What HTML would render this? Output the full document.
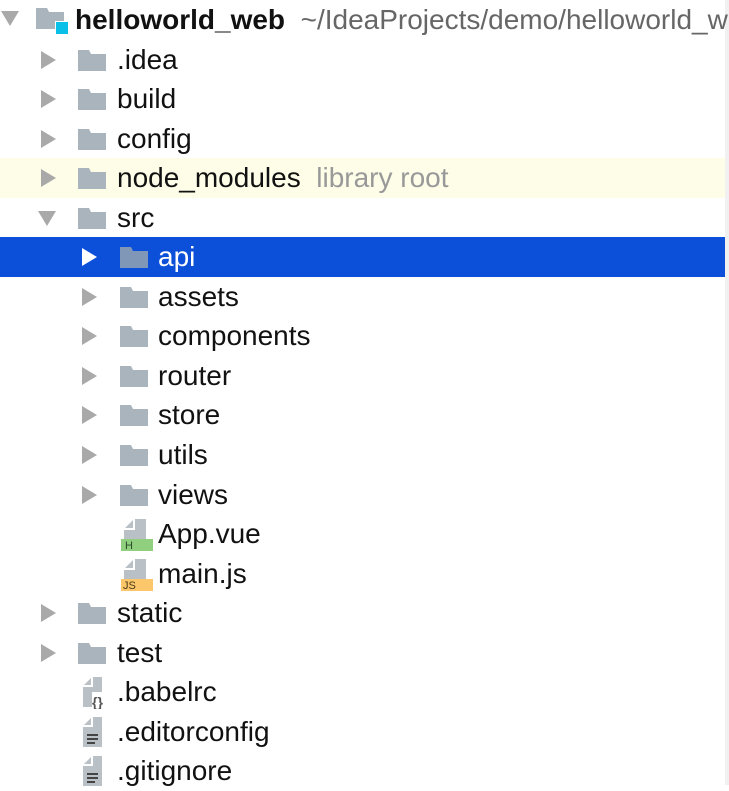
<!DOCTYPE html>
<html><head><meta charset="utf-8"><style>
html,body{margin:0;padding:0;width:729px;height:785px;overflow:hidden;background:#fff;font-family:"Liberation Sans",sans-serif;}
.r{position:absolute;left:0;width:725px;height:40px;}
.t{position:absolute;top:4px;font-size:28px;line-height:32px;color:#111;white-space:nowrap;}
.f{position:absolute;top:10px;width:28px;height:21px;}
.a{position:absolute;top:11px;}
.sb{position:absolute;right:0;top:0;width:4px;height:785px;background:#f1f1f1;}
</style></head><body>
<div class="sb"></div>
<svg width="0" height="0" style="position:absolute"><defs>
<symbol id="fold" viewBox="0 0 28 21"><path d="M0 0H11L13 4H28V21H0Z" fill="#a9b4bc"/></symbol>
<symbol id="ar" viewBox="0 0 16 18"><path d="M1 0L16 9L1 18Z" fill="#a9a9a9"/></symbol>
<symbol id="ad" viewBox="0 0 18 16"><path d="M0 1H18L9 16Z" fill="#a9a9a9"/></symbol>
</defs></svg>

<div class="r" style="top:0">
<svg class="a" style="left:1px;top:10px" width="18" height="16"><use href="#ad"/></svg>
<svg class="f" style="left:36px;top:8px" width="28" height="21"><use href="#fold"/></svg>
<div style="position:absolute;left:55px;top:21px;width:12px;height:12px;background:#0bc0e8;border:1.5px solid #fff"></div>
<div class="t" style="left:75px;font-weight:bold">helloworld_web <span style="font-weight:normal;color:#666">&nbsp;~/IdeaProjects/demo/helloworld_web</span></div>
</div>

<div class="r" style="top:40px"><svg class="a" style="left:40px" width="16" height="18"><use href="#ar"/></svg><svg class="f" style="left:78px" width="28" height="21"><use href="#fold"/></svg><div class="t" style="left:117px">.idea</div></div>
<div class="r" style="top:79px"><svg class="a" style="left:40px" width="16" height="18"><use href="#ar"/></svg><svg class="f" style="left:78px" width="28" height="21"><use href="#fold"/></svg><div class="t" style="left:117px">build</div></div>
<div class="r" style="top:119px"><svg class="a" style="left:40px" width="16" height="18"><use href="#ar"/></svg><svg class="f" style="left:78px" width="28" height="21"><use href="#fold"/></svg><div class="t" style="left:117px">config</div></div>
<div class="r" style="top:158px;background:#fdfde8"><svg class="a" style="left:40px" width="16" height="18"><use href="#ar"/></svg><svg class="f" style="left:78px" width="28" height="21"><use href="#fold"/></svg><div class="t" style="left:117px">node_modules <span style="color:#999">&nbsp;library root</span></div></div>
<div class="r" style="top:198px"><svg class="a" style="left:38px;top:12px" width="18" height="16"><use href="#ad"/></svg><svg class="f" style="left:78px" width="28" height="21"><use href="#fold"/></svg><div class="t" style="left:117px">src</div></div>
<div class="r" style="top:237px;background:#0c4fd8"><svg class="a" style="left:81px" width="16" height="18"><path d="M1 0L16 9L1 18Z" fill="#fff"/></svg><svg class="f" style="left:120px" width="28" height="21"><path d="M0 0H11L13 4H28V21H0Z" fill="#8197b8"/></svg><div class="t" style="left:158px;color:#fff">api</div></div>
<div class="r" style="top:277px"><svg class="a" style="left:81px" width="16" height="18"><use href="#ar"/></svg><svg class="f" style="left:120px" width="28" height="21"><use href="#fold"/></svg><div class="t" style="left:158px">assets</div></div>
<div class="r" style="top:316px"><svg class="a" style="left:81px" width="16" height="18"><use href="#ar"/></svg><svg class="f" style="left:120px" width="28" height="21"><use href="#fold"/></svg><div class="t" style="left:158px">components</div></div>
<div class="r" style="top:356px"><svg class="a" style="left:81px" width="16" height="18"><use href="#ar"/></svg><svg class="f" style="left:120px" width="28" height="21"><use href="#fold"/></svg><div class="t" style="left:158px">router</div></div>
<div class="r" style="top:395px"><svg class="a" style="left:81px" width="16" height="18"><use href="#ar"/></svg><svg class="f" style="left:120px" width="28" height="21"><use href="#fold"/></svg><div class="t" style="left:158px">store</div></div>
<div class="r" style="top:435px"><svg class="a" style="left:81px" width="16" height="18"><use href="#ar"/></svg><svg class="f" style="left:120px" width="28" height="21"><use href="#fold"/></svg><div class="t" style="left:158px">utils</div></div>
<div class="r" style="top:475px"><svg class="a" style="left:81px" width="16" height="18"><use href="#ar"/></svg><svg class="f" style="left:120px" width="28" height="21"><use href="#fold"/></svg><div class="t" style="left:158px">views</div></div>

<div class="r" style="top:514px">
<svg style="position:absolute;left:120px;top:5px" width="34" height="34"><path d="M4 0H26V24H4Z" fill="#b9c1c7"/><path d="M4 0H14L4 10Z" fill="#fff"/><path d="M4 10H14V0" fill="none" stroke="#fff" stroke-width="2"/><rect x="1" y="20" width="32" height="12" fill="#8fcf7e"/><text x="5" y="30" font-family="Liberation Sans" font-size="11" fill="#2c4a2c">H</text></svg>
<div class="t" style="left:158px">App.vue</div></div>
<div class="r" style="top:554px">
<svg style="position:absolute;left:120px;top:5px" width="34" height="34"><path d="M4 0H26V24H4Z" fill="#b9c1c7"/><path d="M4 0H14L4 10Z" fill="#fff"/><path d="M4 10H14V0" fill="none" stroke="#fff" stroke-width="2"/><rect x="1" y="20" width="32" height="12" fill="#fbc76a"/><text x="3" y="30" font-family="Liberation Sans" font-size="11" fill="#4a3a1a">JS</text></svg>
<div class="t" style="left:158px">main.js</div></div>

<div class="r" style="top:593px"><svg class="a" style="left:40px" width="16" height="18"><use href="#ar"/></svg><svg class="f" style="left:78px" width="28" height="21"><use href="#fold"/></svg><div class="t" style="left:117px">static</div></div>
<div class="r" style="top:633px"><svg class="a" style="left:40px" width="16" height="18"><use href="#ar"/></svg><svg class="f" style="left:78px" width="28" height="21"><use href="#fold"/></svg><div class="t" style="left:117px">test</div></div>

<div class="r" style="top:672px">
<svg style="position:absolute;left:80px;top:5px" width="32" height="32"><path d="M3 0H22V30H3Z" fill="#b9c1c7"/><path d="M3 0H12L3 9Z" fill="#fff"/><path d="M3 9H12V0" fill="none" stroke="#fff" stroke-width="2"/><rect x="12" y="15" width="18" height="17" fill="#fff"/><text x="12" y="30" font-family="Liberation Sans" font-size="14" font-weight="bold" fill="#555">{}</text></svg>
<div class="t" style="left:117px">.babelrc</div></div>
<div class="r" style="top:712px">
<svg style="position:absolute;left:80px;top:5px" width="26" height="32"><path d="M3 0H22V30H3Z" fill="#b9c1c7"/><path d="M3 0H12L3 9Z" fill="#fff"/><path d="M3 9H12V0" fill="none" stroke="#fff" stroke-width="2"/><rect x="7" y="17" width="11" height="2" fill="#444"/><rect x="7" y="21" width="11" height="2" fill="#444"/><rect x="7" y="25" width="8" height="2" fill="#444"/></svg>
<div class="t" style="left:117px">.editorconfig</div></div>
<div class="r" style="top:751px">
<svg style="position:absolute;left:80px;top:5px" width="26" height="32"><path d="M3 0H22V30H3Z" fill="#b9c1c7"/><path d="M3 0H12L3 9Z" fill="#fff"/><path d="M3 9H12V0" fill="none" stroke="#fff" stroke-width="2"/><rect x="7" y="17" width="11" height="2" fill="#444"/><rect x="7" y="21" width="11" height="2" fill="#444"/><rect x="7" y="25" width="8" height="2" fill="#444"/></svg>
<div class="t" style="left:117px">.gitignore</div></div>
</body></html>
